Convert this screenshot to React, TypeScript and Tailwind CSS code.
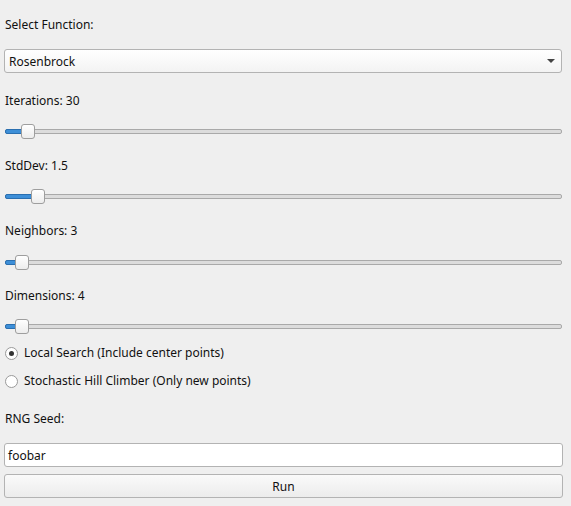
import React from 'react';

const font = { fontFamily: '"Noto Sans", "Open Sans", sans-serif' };

function Slider({ pos }: { pos: number }) {
  return (
    <div className="relative h-[16px] mx-[5px] mr-[9px]">
      <div className="absolute left-0 right-0 top-[6px] h-[5px] rounded-[2px] border border-[#a9a9a9] bg-[#dcdcdc]" />
      <div
        className="absolute left-0 top-[6px] h-[5px] rounded-l-[2px] border border-[#2a6fb0] bg-[#3d8fd8]"
        style={{ width: pos + 4 }}
      />
      <div
        className="absolute top-[1px] h-[15px] w-[14px] rounded-[3px] border border-[#9e9e9e] bg-gradient-to-b from-white to-[#ededed]"
        style={{ left: pos }}
      />
    </div>
  );
}

function Radio({ checked, label, className }: { checked: boolean; label: string; className?: string }) {
  return (
    <div className={`flex items-center h-[18px] ${className ?? ''}`}>
      <div className="ml-[5px] w-[13px] h-[13px] rounded-full border border-[#9a9a9a] bg-white flex items-center justify-center">
        {checked && <div className="w-[5px] h-[5px] rounded-full bg-[#333]" />}
      </div>
      <span className="ml-[6px] text-[#111]">{label}</span>
    </div>
  );
}

export default function App() {
  return (
    <div className="w-[571px] h-[506px] bg-[#efefef] flex flex-col text-[12px] leading-[18px] text-[#111]" style={font}>
      <div className="mt-[15px] h-[18px] leading-[20px] px-[5px]">Select Function:</div>

      <div className="mt-[16px] mx-[4px] mr-[9px] h-[24px] pt-[2px] flex items-center justify-between rounded-[3px] border border-[#b3b3b3] bg-gradient-to-b from-white to-[#f3f3f3] px-[4px]">
        <span>Rosenbrock</span>
        <svg width="8" height="4" viewBox="0 0 8 4" className="mr-[2px] -mt-[2px]">
          <path d="M0 0h8L4 4z" fill="#444" />
        </svg>
      </div>

      <div className="mt-[18px] h-[18px] leading-[20px] px-[5px]">Iterations: 30</div>
      <div className="mt-[14px]"><Slider pos={16} /></div>

      <div className="mt-[17px] h-[18px] leading-[20px] px-[5px]">StdDev: 1.5</div>
      <div className="mt-[14px]"><Slider pos={26} /></div>

      <div className="mt-[17px] h-[18px] leading-[20px] px-[5px]">Neighbors: 3</div>
      <div className="mt-[15px]"><Slider pos={10} /></div>

      <div className="mt-[16px] h-[18px] leading-[20px] px-[5px]">Dimensions: 4</div>
      <div className="mt-[14px]"><Slider pos={10} /></div>

      <Radio className="mt-[10px]" checked label="Local Search (Include center points)" />
      <Radio className="mt-[10px]" checked={false} label="Stochastic Hill Climber (Only new points)" />

      <div className="mt-[19px] h-[18px] leading-[20px] px-[5px]">RNG Seed:</div>

      <div className="mt-[16px] mx-[4px] mr-[8px] h-[24px] pt-[2px] flex items-center rounded-[3px] border border-[#b3b3b3] bg-white px-[3px]">
        foobar
      </div>

      <button className="mt-[7px] mx-[4px] mr-[8px] h-[24px] pt-[2px] flex items-center justify-center rounded-[3px] border border-[#b3b3b3] bg-gradient-to-b from-[#fafafa] to-[#ececec]">
        Run
      </button>
    </div>
  );
}
